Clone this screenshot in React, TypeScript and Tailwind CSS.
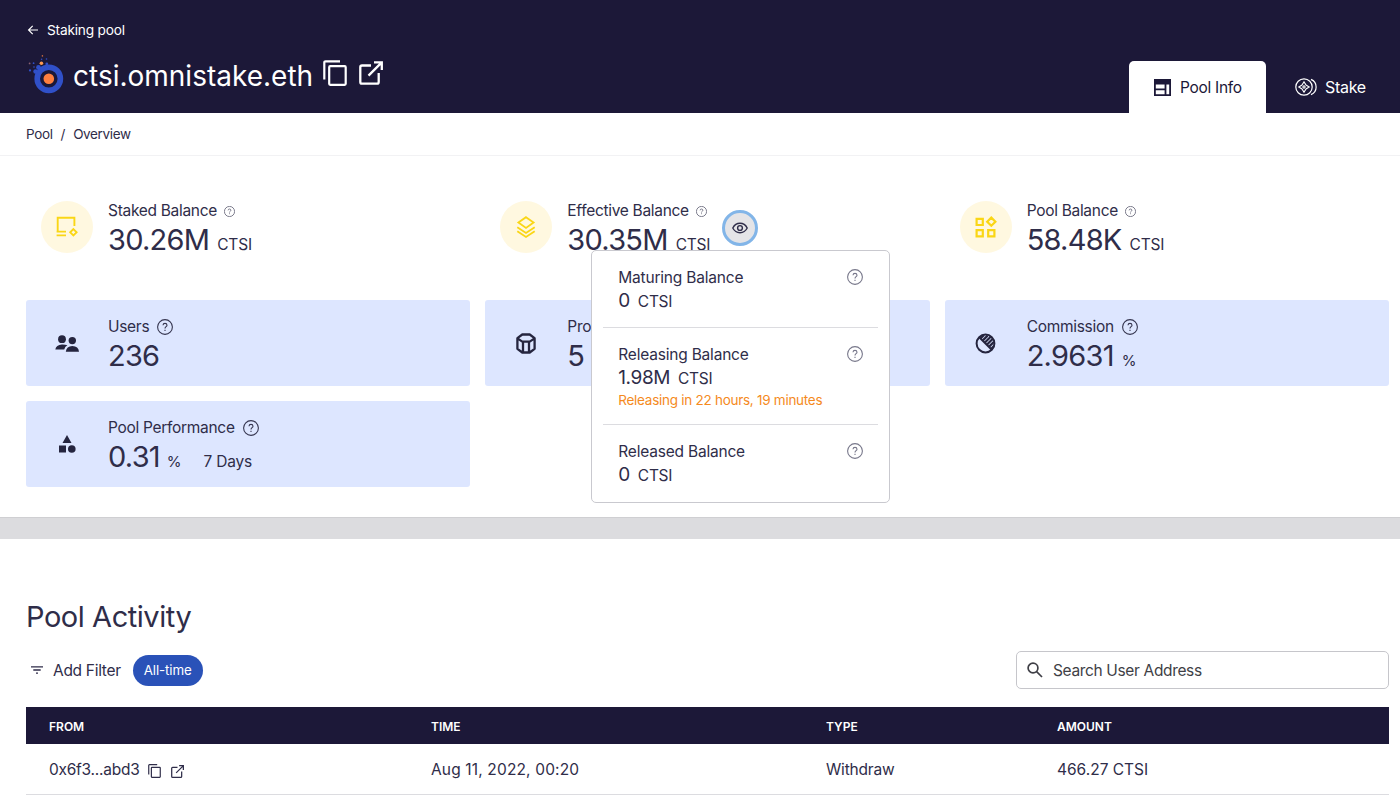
import React from "react";

type IconProps = { className?: string };

const BackIcon = ({ className }: IconProps) => (
  <svg className={className} viewBox="0 0 12 12" fill="none" stroke="currentColor" strokeWidth="1.2">
    <path d="M11 6H2M5.7 1.9L1.6 6L5.7 10.1" />
  </svg>
);

const CopyIcon = ({ className }: IconProps) => (
  <svg className={className} viewBox="0 0 24 26" fill="none" stroke="currentColor" strokeWidth="2.2">
    <path d="M1.3 19.5V2.6Q1.3 1.3 2.6 1.3H17" />
    <rect x="6.2" y="6.2" width="16.5" height="18.6" rx="1" />
  </svg>
);

const OpenIcon = ({ className }: IconProps) => (
  <svg className={className} viewBox="0 0 24 24" fill="none" stroke="currentColor" strokeWidth="2.3">
    <path d="M12 4.5H3Q1.3 4.5 1.3 6.2V21Q1.3 22.7 3 22.7H18Q19.7 22.7 19.7 21V12" />
    <path d="M15 1.3H22.8V9M22.5 1.6L9.5 14.6" />
  </svg>
);

const HelpIcon = ({ className }: IconProps) => (
  <svg className={className} viewBox="0 0 16 16" fill="none" stroke="currentColor">
    <circle cx="8" cy="8" r="7.4" strokeWidth="1.1" />
    <path d="M6 6.3Q6.1 4.4 8 4.4T10 6.2C10 7.7 8 7.6 8 9.4M8 10.7V11.9" strokeWidth="1.1" />
  </svg>
);

const Logo = () => (
  <svg className="h-[40px] w-[37px] shrink-0" viewBox="0 0 37 40">
    <circle cx="20.8" cy="23.8" r="11.6" fill="#1b1838" stroke="#3050c8" strokeWidth="5.6" />
    <circle cx="20.8" cy="23.8" r="5.3" fill="#ff7f3f" />
    <circle cx="7.5" cy="16.5" r="2.2" fill="#3050c8" />
    <circle cx="10.5" cy="12.5" r="2.4" fill="#3050c8" />
    <circle cx="13.4" cy="8.2" r="1.8" fill="#ff9a4f" />
    <circle cx="18.8" cy="9" r="1.4" fill="#3050c8" />
    <circle cx="14.4" cy="0.9" r="0.8" fill="#c8683f" />
    <circle cx="13.6" cy="4.2" r="0.8" fill="#3050c8" />
    <circle cx="18.5" cy="4" r="0.8" fill="#3050c8" />
    <circle cx="1.6" cy="8.4" r="0.9" fill="#8a6070" />
    <circle cx="5.6" cy="8.2" r="0.9" fill="#3050c8" />
    <circle cx="2" cy="15.4" r="1.1" fill="#3050c8" />
    <circle cx="6" cy="12" r="0.8" fill="#3050c8" />
  </svg>
);

const PoolInfoIcon = () => (
  <svg className="h-[17px] w-[17px]" viewBox="0 0 17 17">
    <path fill="currentColor" fillRule="evenodd" d="M0 0H17V17H0ZM1.8 5.4H10.6V9.4H1.8ZM1.8 11.2H10.6V15.2H1.8ZM12.4 5.4H15.2V15.2H12.4Z" />
  </svg>
);

const StakeIcon = () => (
  <svg className="h-[18px] w-[23px]" viewBox="0 0 23 18" fill="none" stroke="currentColor" strokeWidth="1.2">
    <circle cx="9" cy="9" r="8.2" />
    <path d="M16 1.4A8.2 8.2 0 0 1 16 16.6" />
    <path d="M9 3.8L11 7L14.2 9L11 11L9 14.2L7 11L3.8 9L7 7ZM9 7V11M7 9H11" strokeWidth="1.1" />
  </svg>
);

const StakedIcon = () => (
  <svg className="h-[24px] w-[24px]" viewBox="0 0 24 24" fill="none" stroke="currentColor" strokeWidth="1.9">
    <path d="M2.7 16.5V2.7H19.4V11M1.6 16.6H11M1.6 20.4H11M18.4 14.1L21.6 17.3L18.4 20.5L15.2 17.3Z" />
  </svg>
);

const LayersIcon = () => (
  <svg className="h-[24px] w-[22px]" viewBox="0 0 22 24" fill="none" stroke="currentColor" strokeWidth="1.8">
    <path d="M11 2.2L18.6 7.6L11 13L3.4 7.6Z" />
    <path d="M2.3 12.2L11 18L19.7 12.2M2.3 16.2L11 22L19.7 16.2" />
  </svg>
);

const WidgetsIcon = () => (
  <svg className="h-[24px] w-[24px]" viewBox="0 0 24 24" fill="none" stroke="currentColor" strokeWidth="2.2">
    <path d="M2.6 3.8H8.8V10H2.6ZM2.6 15.2H8.8V21.4H2.6ZM14.2 15.2H20.4V21.4H14.2ZM17.3 2.6L21.4 6.7L17.3 10.8L13.2 6.7Z" />
  </svg>
);

const UsersIcon = () => (
  <svg className="h-[17px] w-[24px]" viewBox="0 0 24 17" fill="currentColor">
    <circle cx="7" cy="4.2" r="3.9" />
    <circle cx="17.3" cy="5.6" r="3.7" />
    <path d="M0.3 14.6Q1 9.6 7 9.4Q10 9.3 12.4 10.2Q9.8 11.6 9.2 14.6ZM10.8 16.8Q11.5 11.2 17.3 11Q23.5 11.2 24 16.8Z" />
  </svg>
);

const BlocksIcon = () => (
  <svg className="h-[21px] w-[20px]" viewBox="0 0 20 21" fill="none" stroke="currentColor" strokeWidth="2.3" strokeLinejoin="round">
    <path d="M6.3 1.5H13.7L18.6 5.2V15.8L13.7 19.5H6.3L1.4 15.8V5.2ZM1.4 5.4L6.3 8.6H13.7L18.6 5.4M7 8.6V19.5M13 8.6V19.5" />
  </svg>
);

const CommissionIcon = () => (
  <svg className="h-[21px] w-[21px]" viewBox="0 0 21 21" fill="none" stroke="currentColor">
    <circle cx="10.5" cy="10.5" r="8.9" strokeWidth="2" />
    <path d="M4 4L17 17" strokeWidth="1.9" />
    <path d="M5.5 5.5L9 2M7.6 7.6L12.6 2.6M9.7 9.7L15.7 3.7M11.8 11.8L17.8 5.8M13.9 13.9L19 8.8M16 16L19 13" strokeWidth="2.2" />
  </svg>
);

const ShapesIcon = () => (
  <svg className="h-[19px] w-[18px]" viewBox="0 0 18 19" fill="currentColor">
    <path d="M9 0L13.5 8H4.5ZM1 10.5H8V17.5H1Z" />
    <circle cx="13.8" cy="14" r="3.8" />
  </svg>
);

const EyeIcon = () => (
  <svg className="h-[12px] w-[16px]" viewBox="0 0 16 12" fill="none" stroke="currentColor" strokeWidth="1.4">
    <path d="M0.8 6Q3.2 1.3 8 1.3T15.2 6Q12.8 10.7 8 10.7T0.8 6Z" />
    <circle cx="8" cy="6" r="2.4" />
  </svg>
);

const FilterIcon = () => (
  <svg className="h-[8px] w-[12px]" viewBox="0 0 12 8" fill="none" stroke="currentColor" strokeWidth="1.3">
    <path d="M0 0.8H12M2.3 4H9.7M5 7.2H7" />
  </svg>
);

const SearchIcon = () => (
  <svg className="h-[16px] w-[16px]" viewBox="0 0 16 16" fill="none" stroke="currentColor" strokeWidth="1.7">
    <circle cx="6" cy="6" r="4.9" />
    <path d="M9.6 9.6L15 15" />
  </svg>
);

type StatProps = {
  icon: React.ReactNode;
  label: React.ReactNode;
  value: React.ReactNode;
  help: string;
};

const StatBody = ({ label, value, help }: Omit<StatProps, "icon">) => (
  <div className="flex flex-col pt-[6px]">
    <div className="flex h-[20px] items-center">
      <span className="text-[15.5px] leading-[20px] tracking-[-0.3px]">{label}</span>
      <HelpIcon className={help} />
    </div>
    <div className="flex h-[38px] items-baseline whitespace-nowrap leading-[38px]">{value}</div>
  </div>
);

const Balance = ({ icon, label, value, help, children }: StatProps & { children?: React.ReactNode }) => (
  <div className="flex h-[86px] items-center pl-[15px]">
    <div className="mr-[15px] flex h-[52px] w-[52px] items-center justify-center rounded-full bg-[#fff8e0] text-[#fad616]">
      {icon}
    </div>
    <StatBody label={label} value={value} help={help} />
    {children}
  </div>
);

const Card = ({ icon, label, value, help }: StatProps) => (
  <div className="flex h-[86px] items-center rounded-[3px] bg-[#dde6ff] pl-[15px]">
    <div className="mr-[15px] flex w-[52px] items-center justify-center text-[#25253f]">{icon}</div>
    <StatBody label={label} value={value} help={help} />
  </div>
);

const PopItem = ({ title, value, note }: { title: React.ReactNode; value: string; note?: string }) => (
  <div className="flex justify-between pl-[15px] pr-[15px]">
    <div className="flex flex-col">
      <span className="text-[15.5px] leading-[24px] tracking-[-0.2px]">{title}</span>
      <span className="flex h-[21px] items-baseline gap-[8px] leading-[21px]">
        <span className="text-[19px] tracking-[-0.4px]">{value}</span>
        <span className="text-[15.5px] tracking-[-0.3px]">CTSI</span>
      </span>
      {note && <span className="mt-[3px] whitespace-nowrap text-[13.5px] leading-[19px] tracking-[-0.27px] text-[#f58a1d]">{note}</span>}
    </div>
    <HelpIcon className="mt-[3px] h-[16px] w-[16px] shrink-0 text-[#77778a]" />
  </div>
);

const big = "text-[29px] tracking-[-0.75px]";
const smallHelp = "ml-[7px] h-[11px] w-[11px] text-[#55556a]";
const largeHelp = "ml-[8px] h-[16px] w-[16px] text-[#35354f]";
const unit = "ml-[8px] text-[15.5px] tracking-[-0.2px]";

export default function App() {
  return (
    <div className="h-[805px] w-[1400px] overflow-hidden bg-white font-['Inter',sans-serif] text-[#2f2d49]">
      <header className="flex h-[113px] justify-between bg-[#1c1838] pl-[27px] text-white">
        <div className="flex flex-col">
          <div className="mt-[21px] flex h-[18px] items-center gap-[8px]">
            <BackIcon className="h-[12px] w-[12px]" />
            <span className="text-[13.7px] leading-[18px] tracking-[-0.2px]">Staking pool</span>
          </div>
          <div className="mt-[15px] flex h-[42px] items-center">
            <div className="ml-[1px]"><Logo /></div>
            <h1 className="ml-[8px] pt-[1px] text-[28px] leading-[42px]">ctsi.omnistake.eth</h1>
            <CopyIcon className="mb-[4px] ml-[10px] h-[26px] w-[24px]" />
            <OpenIcon className="mb-[4px] ml-[12px] h-[24px] w-[24px]" />
          </div>
        </div>
        <nav className="flex items-end">
          <a className="flex h-[52px] w-[137px] items-center rounded-t-[5px] bg-white pl-[25px] text-[15.5px] tracking-[-0.3px] text-[#1c1838]">
            <PoolInfoIcon />
            <span className="ml-[9px] pt-[1px]">Pool Info</span>
          </a>
          <a className="flex h-[52px] w-[134px] items-center pl-[29px] text-[16px] tracking-[-0.3px]">
            <StakeIcon />
            <span className="ml-[7px]">Stake</span>
          </a>
        </nav>
      </header>

      <div className="flex h-[43px] items-center border-b border-[#f2f2f4] pl-[26px] text-[13.5px] tracking-[-0.35px]">
        <span>Pool</span>
        <span className="mx-[8px]">/</span>
        <span>Overview</span>
      </div>

      <section className="h-[361px] px-[26px] pt-[28px]">
        <div className="grid w-[1363px] grid-cols-3 gap-x-[15px]">
          <Balance icon={<StakedIcon />} label="Staked Balance" help={smallHelp}
            value={<><span className={big}>30.26M</span><span className={unit}>CTSI</span></>} />
          <Balance icon={<LayersIcon />} label="Effective Balance" help={smallHelp}
            value={<><span className={big}>30.35M</span><span className={unit}>CTSI</span></>}>
            <div className="relative ml-[12px] mt-[2px]">
              <button className="flex h-[36px] w-[36px] items-center justify-center rounded-full border-[3px] border-[#82b5e8] bg-[#e4e4e7]">
                <EyeIcon />
              </button>
              <div className="absolute left-[-131px] top-[40px] z-10 flex h-[253px] w-[299px] flex-col rounded-[5px] border border-[#c9c9cf] bg-white px-[11px] pt-[15px]">
                <div className="h-[62px] border-b border-[#dcdce0]"><PopItem title="Maturing Balance" value="0" /></div>
                <div className="h-[97px] border-b border-[#dcdce0] pt-[15px]"><PopItem title="Releasing Balance" value="1.98M" note="Releasing in 22 hours, 19 minutes" /></div>
                <div className="pt-[15px]"><PopItem title="Released Balance" value="0" /></div>
              </div>
            </div>
          </Balance>
          <Balance icon={<WidgetsIcon />} label="Pool Balance" help={smallHelp}
            value={<><span className={big}>58.48K</span><span className={unit}>CTSI</span></>} />
        </div>
        <div className="mt-[30px] grid w-[1363px] grid-cols-3 gap-[15px]">
          <Card icon={<UsersIcon />} label="Users" help={largeHelp} value={<span className={big}>236</span>} />
          <Card icon={<BlocksIcon />} label="Produced Blocks" help={largeHelp} value={<span className={big}>5</span>} />
          <Card icon={<CommissionIcon />} label="Commission" help={largeHelp}
            value={<><span className={big}>2.9631</span><span className="ml-[8px] text-[15px]">%</span></>} />
          <Card icon={<ShapesIcon />} label="Pool Performance" help={largeHelp}
            value={<><span className={big}>0.31</span><span className="ml-[7px] text-[15px]">%</span><span className="ml-[22px] text-[15.5px] tracking-[-0.2px]">7 Days</span></>} />
        </div>
      </section>

      <div className="h-[22px] border-t border-[#cfcfd2] bg-[#dcdcdf]" />

      <section className="pl-[26px] pt-[56px]">
        <h2 className="h-[44px] text-[29px] leading-[44px] tracking-[-0.45px]">Pool Activity</h2>
        <div className="mt-[12px] flex h-[38px] w-[1363px] items-center">
          <span className="ml-[5px]"><FilterIcon /></span>
          <span className="ml-[10px] pt-[1px] text-[15.5px] tracking-[-0.3px]">Add Filter</span>
          <span className="ml-[12px] flex h-[31px] w-[70px] items-center justify-center rounded-full bg-[#2a52b8] pt-[1px] text-[13.3px] tracking-[-0.1px] text-white">All-time</span>
          <div className="ml-auto flex h-[38px] w-[373px] items-center rounded-[5px] border border-[#c6c6cb] pl-[10px] text-[15.5px] tracking-[-0.35px] text-[#3f3f46]">
            <SearchIcon />
            <span className="ml-[10px] pt-[1px]">Search User Address</span>
          </div>
        </div>
        <div className="mt-[18px] w-[1363px]">
          <div className="grid h-[37px] grid-cols-[382px_395px_231px_1fr] items-center bg-[#1c1838] pl-[23px] pt-[2px] text-[12px] font-semibold text-white">
            <span>FROM</span><span>TIME</span><span>TYPE</span><span>AMOUNT</span>
          </div>
          <div className="grid h-[51px] grid-cols-[382px_395px_231px_1fr] items-center border-b border-[#dcdce0] pl-[23px] pt-[1px] text-[15.5px]">
            <span className="flex items-center tracking-[-0.25px]">
              0x6f3...abd3
              <CopyIcon className="ml-[9px] mt-[3px] h-[14px] w-[13px]" />
              <OpenIcon className="ml-[10px] mt-[3px] h-[13px] w-[13px]" />
            </span>
            <span className="tracking-[0.15px]">Aug 11, 2022, 00:20</span>
            <span className="tracking-[-0.2px]">Withdraw</span>
            <span>466.27 CTSI</span>
          </div>
        </div>
      </section>
    </div>
  );
}
